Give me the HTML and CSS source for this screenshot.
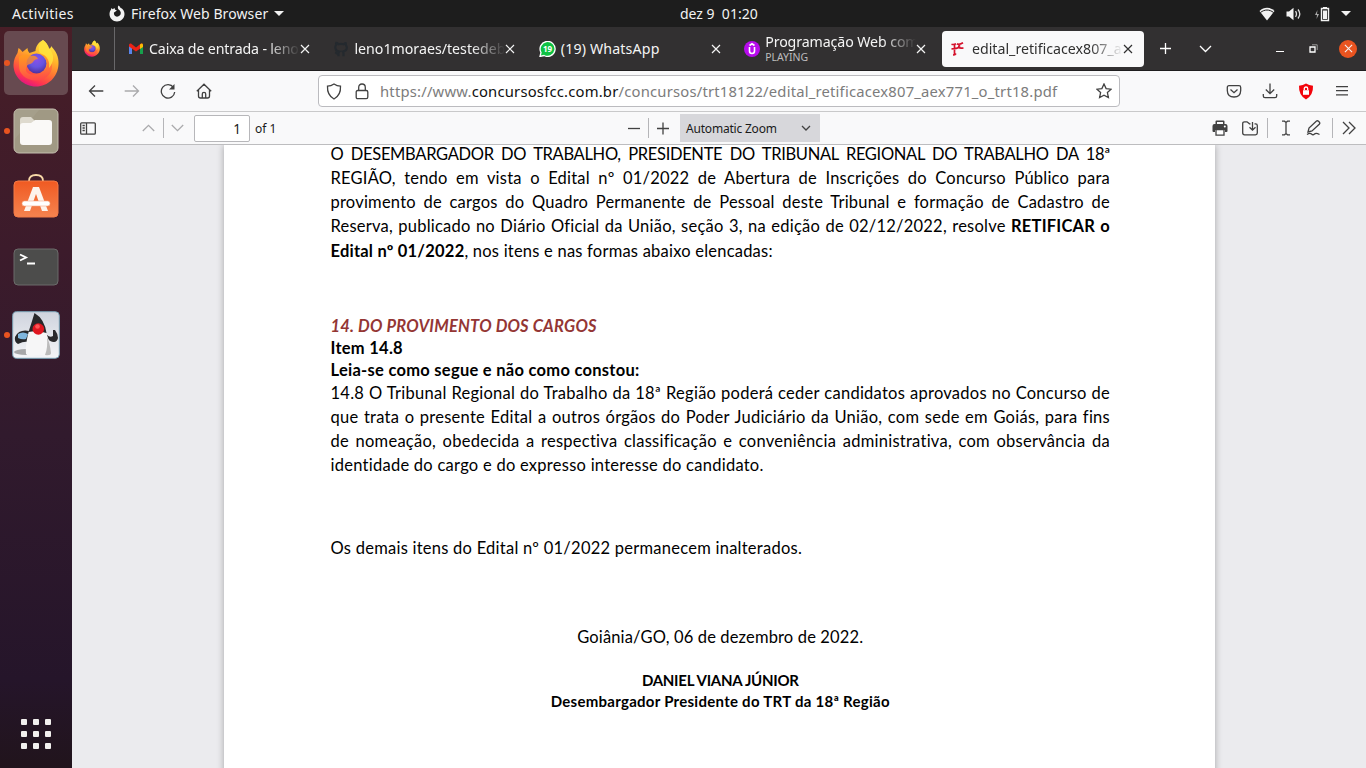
FILE: index.html
```html
<!DOCTYPE html>
<html lang="pt-BR">
<head>
<meta charset="utf-8">
<title>edital_retificacex807_aex771_o_trt18.pdf</title>
<link rel="stylesheet" href="styles.css">
</head>
<body>
<svg class="defs" width="0" height="0">
  <defs>
    <linearGradient id="fire" x1=".8" y1="0" x2=".35" y2="1"><stop offset="0" stop-color="#fff04a"/><stop offset=".35" stop-color="#ffb52a"/><stop offset=".65" stop-color="#ff6a35"/><stop offset=".85" stop-color="#ff3450"/><stop offset="1" stop-color="#e01583"/></linearGradient>
    <radialGradient id="globe" cx=".5" cy=".3" r=".75"><stop offset="0" stop-color="#8a50ea"/><stop offset=".5" stop-color="#6655e0"/><stop offset="1" stop-color="#4b2a94"/></radialGradient>
    <linearGradient id="fox" x1=".3" y1="0" x2=".6" y2="1"><stop offset="0" stop-color="#ff9a1e"/><stop offset=".5" stop-color="#ff7a35"/><stop offset="1" stop-color="#ff4a48"/></linearGradient>
    <linearGradient id="bag" x1="0" y1="0" x2="0" y2="1"><stop offset="0" stop-color="#f05a22"/><stop offset="1" stop-color="#f5834f"/></linearGradient>
    <linearGradient id="duke" x1="0" y1="0" x2="0" y2="1"><stop offset="0" stop-color="#cfd3dd"/><stop offset="1" stop-color="#f4f5f8"/></linearGradient>
    <symbol id="firefox" viewBox="0 0 46 48">
      <path d="M30 1c3 2 5 5 6 9 2-1 2-2 2-3 5 5 8 11 7.500 18C45 38 35 47.500 23 47.500S.5 38 .5 26c0-5 2-9 4-12l1-5c2 1 3 3 4 4l5-4c0 2 1 4 2 5l6-2c0-4 3-9 7.500-11z" fill="url(#fire)"/>
      <circle cx="23.500" cy="24.500" r="10" fill="url(#globe)"/>
      <path d="M6 18c4-3 9-3 12-1 3-1 6 0 7 3-2 0-4 1-5 3-2 3-6 1-7 6-1 5 4 7 9 6.500 6 0 12-4 12-10 0-5-3-9-7-10 7-1 12 5 12 12 0 8-7 14-16 14C13 41.500 6 35 6 27z" fill="url(#fox)" opacity=".8"/>
      <path d="M30 1c-5 5-5 10-3 13 8 3 10 9 9 15 5-6 6-13 0-20-1-3-3-6-6-8z" fill="#ffe33d" opacity=".85"/>
    </symbol>
    <symbol id="x" viewBox="0 0 10 10"><path d="M1 1l8 8M9 1L1 9" stroke="currentColor" stroke-width="1.200" fill="none"/></symbol>
  </defs>
</svg>

<header class="topbar">
  <span class="activities">Activities</span>
  <svg class="ffmono" width="16" height="17" viewBox="0 0 16 17"><path d="M9.500.5c1 .6 1.500 1.500 2 2.300C14 4 15.500 6.300 15.500 9c0 4.200-3.400 7.500-7.500 7.500S.5 13.200.5 9c0-2 .7-3.500 1.500-4.600L2.500 3l1.200 1.200L5.500 3l.6 1.800 1.800.5-2 1.600-1 .7C4.700 10 6 11.700 8 11.700c2.200 0 3.800-1.600 3.800-3.600 0-1.500-.8-2.700-2-3.400C8.600 3.500 8.600 1.800 9.500.5z" fill="#f2f2f2"/></svg>
  <span class="appname">Firefox Web Browser</span>
  <i class="tri tri-app"></i>
  <span class="clock">dez 9&nbsp; 01:20</span>
  <div class="tray">
    <svg width="16" height="14" viewBox="0 0 16 14"><path d="M.5 4C5-.2 11-.2 15.500 4L8 13.500z" fill="#f2f2f2"/><path d="M1.500 5.500c4-3.300 9-3.300 13 0" stroke="#1d1d1d" fill="none"/></svg>
    <svg width="16" height="14" viewBox="0 0 16 14"><path d="M.5 4.500H3L7.500.8v12.400L3 9.500H.5z" fill="#f2f2f2"/><path d="M9.500 4.200q2 2.800 0 5.600M12 2.500q3.600 4.500 0 9" stroke="#ddd" stroke-width="1.300" fill="none"/></svg>
    <svg width="16" height="16" viewBox="0 0 16 16"><path d="M3.500 4L1 9h2L2.500 13 5 8H3z" fill="#aaa"/><path d="M9 1.700h4M7.500 2.500h7v12h-7z" fill="none" stroke="#f2f2f2" stroke-width="1.400"/><path d="M9 4.500h4V13H9z" fill="#f2f2f2"/></svg>
    <i class="tri"></i>
  </div>
</header>

<div class="desktop">
  <nav class="dock">
    <div class="tile tile-active"><i class="dot"></i><svg width="46" height="48"><use href="#firefox"/></svg></div>
    <div class="tile"><i class="dot"></i>
      <svg width="46" height="46" viewBox="0 0 46 46"><rect x="1" y="1" width="44" height="44" rx="5" fill="#a09984" stroke="#c4beaf"/><path d="M6 2h20L2 31V6q0-4 4-4z" fill="#fff" opacity=".06"/><path d="M7 12q0-3 3-3h8l4 4v6H7z" fill="#dedace"/><path d="M10 15h8l4-3h14q3 0 3 3v19q0 3-3 3H10q-3 0-3-3V18q0-3 3-3z" fill="#faf9f7"/></svg></div>
    <div class="tile tile-bag">
      <svg width="46" height="46" viewBox="0 0 46 46"><path d="M16 12V9q0-6 7-6t7 6v3" fill="none" stroke="#f8d9a8" stroke-width="1.800"/><rect x="1" y="9" width="44" height="36" rx="4" fill="url(#bag)" stroke="#f37a46"/><path d="M20 15h6l9 24h-6l-6-17-6 17h-6z" fill="#fdf3ec"/><rect x="9" y="29" width="28" height="5" rx="2.500" fill="#fff" stroke="#f4aa86" stroke-width=".6"/></svg></div>
    <div class="tile">
      <svg width="46" height="38" viewBox="0 0 46 38"><rect x="1" y="1" width="44" height="36" rx="4" fill="#4c4c4b" stroke="#6b6b6a"/><path d="M7 6.500l6 3-6 3M14 15.500h8" stroke="#fff" stroke-width="1.900" fill="none"/></svg></div>
    <div class="tile"><i class="dot"></i>
      <svg width="48" height="48" viewBox="0 0 48 48"><rect x=".7" y=".7" width="46.600" height="46.600" rx="4" fill="url(#duke)" stroke="#7aa4b8"/><ellipse cx="14" cy="41" rx="12" ry="3" fill="#777" opacity=".6"/><path d="M17 20Q7 18 3 26q-1 5 3 7 6-3 10-2z" fill="#27282b"/><path d="M6 23q5-3 10 0l-2 5q-4 1-8-1z" fill="#7fb6de"/><path d="M35 24q3 3 6 1v-6l2 0q3 4 3 8-1 4-4 4-4 0-7-4z" fill="#29292c"/><path d="M17 20q-4 13-3 23 3 4 9 1.500 6-1.500 9 .5 6 1 7-3-1-13-6-22z" fill="#f6f6f7"/><path d="M33 44q6 1 6-2-1-10-4-16 1 11-2 18z" fill="#bbb"/><path d="M22.500 2q10 6 12 20-9-3-18-1 3-9 6-19z" fill="#28282a"/><circle cx="26.300" cy="18" r="5.800" fill="#df1720"/><circle cx="25.500" cy="15.500" r="2.300" fill="#f55"/></svg></div>
    <div class="apps"><i></i><i></i><i></i><i></i><i></i><i></i><i></i><i></i><i></i></div>
  </nav>

  <main class="browser">
    <div class="tabs">
      <div class="pinned"><svg width="16" height="17"><use href="#firefox"/></svg></div>
      <div class="tab">
        <svg width="16" height="16" viewBox="0 0 16 16"><path d="M1 4v9h3V7" fill="#5a84ea"/><path d="M12 7v6h3V4" fill="#17a04c"/><path d="M1 5.500V4q0-2 2-1.500L8 6.500l5-4q2-.5 2 1.500v1.500L8 10.500z" fill="#ee2215"/><path d="M12 3.500q2.500-2 3 .5v2l-3 2z" fill="#fbbc04"/></svg>
        <span class="title title-mail">Caixa de entrada - leno</span><svg class="close" width="10" height="10"><use href="#x"/></svg></div>
      <div class="tab">
        <svg width="16" height="16" viewBox="0 0 16 16"><path d="M5.500 15.300v-2.500c-2 .5-2.500-1.300-3.400-1.600M10.500 15.300v-3c0-1-.3-1.400-.7-1.800 2.400-.3 4-1.300 4-4 0-1-.3-1.700-.9-2.300.1-.7 0-1.500-.2-2-.9 0-1.800.8-2.300 1.100a9 9 0 0 0-4.800 0C5 2.400 4 1.900 3.300 1.900c-.3.800-.3 1.500-.2 2-.5.600-.8 1.300-.8 2.300 0 2.700 1.500 4 4 4.300-.4.400-.8 1-.8 2" fill="none" stroke="#24292e" stroke-width="2.200"/></svg>
        <span class="title title-git">leno1moraes/testedeb</span><svg class="close" width="10" height="10"><use href="#x"/></svg></div>
      <div class="tab">
        <svg width="17" height="16" viewBox="0 0 17 16"><path d="M1 15.500l1-4A7.500 7.500 0 1 1 5 14.500z" fill="#0fc143" stroke="#fff" stroke-width="1.300"/><text x="8.500" y="10.800" class="badge">19</text></svg>
        <span class="title title-wa">(19) WhatsApp</span><svg class="close" width="10" height="10"><use href="#x"/></svg></div>
      <div class="tab">
        <svg width="16" height="16" viewBox="0 0 16 16"><circle cx="8" cy="8" r="8" fill="#b70bec"/><path d="M5.500 6v4q0 2.500 2.500 2.500t2.500-2.500V6M5.500 4.500L8 2.800l2.500 1.700" fill="none" stroke="#fff" stroke-width="1.600"/></svg>
        <div class="stack"><span class="title title-prog">Programação Web com</span><small>PLAYING</small></div><svg class="close" width="10" height="10"><use href="#x"/></svg></div>
      <div class="tab tab-active">
        <svg width="16" height="16" viewBox="0 0 16 16"><path d="M1.500 3.200q2 .8 4.500-.5M4.500 3.500v9.500M1.500 7.800q5 0 9-1.800M3 14q2 0 3-1.500M7 2.700q2 1.500 6-1M10 3.500Q6 8 13.500 7" fill="none" stroke="#d5122c" stroke-width="1.700"/></svg>
        <span class="title title-pdf">edital_retificacex807_a</span><svg class="close" width="10" height="10"><use href="#x"/></svg></div>
      <svg class="plus" width="13" height="13" viewBox="0 0 13 13"><path d="M6.500 1v11M1 6.500h11" stroke="#fff" stroke-width="1.300"/></svg>
      <svg class="alltabs" width="13" height="8" viewBox="0 0 13 8"><path d="M1 1l5.500 5.500L12 1" stroke="#fff" stroke-width="1.300" fill="none"/></svg>
      <div class="winctl">
        <svg width="8" height="9" viewBox="0 0 8 9"><path d="M0 7.500h8" stroke="#fff"/></svg>
        <svg width="9" height="9" viewBox="0 0 9 9"><path d="M1 3h5v5H1z" stroke="#fff" stroke-width="1.300" fill="none"/><path d="M3 .8h5.200V6" stroke="#999" fill="none"/></svg>
        <span class="winclose"><svg width="9" height="9"><use href="#x"/></svg></span>
      </div>
    </div>

    <div class="navbar">
      <div class="navbtns">
        <svg width="16" height="16" viewBox="0 0 16 16"><path d="M15.300 8H1.500M7 2.500L1.500 8 7 13.500" /></svg>
        <svg class="dim" width="16" height="16" viewBox="0 0 16 16"><path d="M.7 8h13.800M9 2.500L14.500 8 9 13.500"/></svg>
        <svg width="16" height="16" viewBox="0 0 16 16"><path d="M13.500 4.500A6.700 6.700 0 1 0 14.700 9"/><path d="M14.500 1v5.500H9z" fill="#414141" stroke="none"/></svg>
        <svg width="16" height="16" viewBox="0 0 16 16"><path d="M.8 8.200L8 1.200l7.200 7M2.500 6.800V13q0 2 2 2h7q2 0 2-2V6.800M6.300 15v-4q0-1.700 1.700-1.700T9.700 11v4"/></svg>
      </div>
      <div class="url">
        <svg width="16" height="17" viewBox="0 0 16 17"><path d="M8 1q3 2 6.500 2.200Q15 12 8 16 1 12 1.500 3.200 5 3 8 1z"/></svg>
        <svg width="14" height="17" viewBox="0 0 14 17"><path d="M3.700 7.500V4.500Q3.700 1 7 1t3.300 3.500v3M1.200 9q0-1.500 1.500-1.500h8.600q1.500 0 1.500 1.500v5q0 1.700-1.500 1.700H2.700Q1.200 15.700 1.200 14z"/></svg>
        <span class="addr">https://www.<b>concursosfcc.com.br</b>/concursos/trt18122/edital_retificacex807_aex771_o_trt18.pdf</span>
        <svg width="16" height="16" viewBox="0 0 16 16"><path d="M8 1l2.100 4.600 5 .6-3.700 3.400 1 5L8 12.200 3.600 14.600l1-5L.9 6.200l5-.6z"/></svg>
      </div>
      <div class="navend">
        <svg width="16" height="16" viewBox="0 0 16 16"><path d="M3 2.700h10q1.700 0 1.700 1.700V7.500Q14.500 14 8 14 1.500 14 1.300 7.500V4.400Q1.300 2.700 3 2.700zM4.500 6.500L8 9.700l3.500-3.200"/></svg>
        <svg width="16" height="16" viewBox="0 0 16 16"><path d="M8 .5v10M3.800 6.500L8 10.700l4.200-4.200M1.300 11v2q0 1.700 1.700 1.700h10q1.700 0 1.700-1.700v-2"/></svg>
        <svg width="16" height="17" viewBox="0 0 16 17"><path d="M8 .5Q11 2.500 15 2.700 15.500 12 8 16.500.5 12 1 2.700 5 2.500 8 .5z" fill="#f3040b" stroke="none"/><path d="M5 7.200h6v4.600H5z" fill="#fff" stroke="none"/><path d="M6.300 7V5.500Q6.300 4 8 4t1.700 1.500V7" stroke="#fff"/></svg>
        <svg class="menu" width="14" height="16" viewBox="0 0 14 16"><path d="M1 3.700h12M1 7.700h12M1 11.900h12"/></svg>
      </div>
    </div>

    <div class="pdfbar">
      <svg class="side" width="16" height="13" viewBox="0 0 16 13"><path d="M1.700.8h12.600q1 0 1 1v9.400q0 1-1 1H1.700q-1 0-1-1V1.800q0-1 1-1zM6.500 1v11M2.500 3.500h2.300M2.500 6h2.300M2.500 8.500h2.300"/></svg>
      <svg class="dim up" width="13" height="8" viewBox="0 0 13 8"><path d="M.8 7l5.700-5.700L12.200 7"/></svg>
      <i class="sep"></i>
      <svg class="dim down" width="13" height="8" viewBox="0 0 13 8"><path d="M.8 1l5.700 5.700L12.200 1"/></svg>
      <span class="pageno">1</span>
      <span class="of">of 1</span>
      <svg class="minus" width="12" height="13" viewBox="0 0 12 13"><path d="M0 6.500h12"/></svg>
      <i class="sep"></i>
      <svg class="zplus" width="12" height="13" viewBox="0 0 12 13"><path d="M0 6.500h12M6 .5v12"/></svg>
      <div class="zoom"><span>Automatic Zoom</span><svg width="10" height="6" viewBox="0 0 10 6"><path d="M1 1l4 4 4-4"/></svg></div>
      <div class="pdfend">
        <svg width="16" height="16" viewBox="0 0 16 16"><path d="M4.500 0.500h7q1 0 1 1V4h1Q15.500 4 15.500 6v5q0 1-1 1H13v-2H3v2H1.500q-1 0-1-1V6q0-2 2-2h1V1.500q0-1 1-1z" fill="#414141" stroke="none"/><path d="M5 2h6v2H5z" fill="#f9f9fa" stroke="none"/><path d="M4 9.700h8v5.500H4z" fill="#fff"/><circle cx="12.800" cy="6.500" r="1" fill="#fff" stroke="none"/></svg>
        <svg class="save" width="16" height="15" viewBox="0 0 16 15"><path d="M5 13.800H2.500q-1.800 0-1.800-1.800V2.500Q.7.800 2.500.8H5l2.500 2h1M12.500 2.800h1q1.800 0 1.800 1.800V12q0 1.800-1.800 1.800H5M10.500 1v8M7.500 6.200l3 3 3-3"/></svg>
        <i class="sep"></i>
        <svg class="caret" width="10" height="16" viewBox="0 0 10 16"><path d="M1 1.200h2.500L5 2.500l1.500-1.300H9M1 14.800h2.500L5 13.500l1.500 1.300H9M5 2.500v11"/></svg>
        <svg class="pen" width="16" height="16" viewBox="0 0 16 16"><path d="M2 12l1-4 7.500-7q1-.7 2 .3l.7.700q1 1 .3 2L6 11z M1 14.500q3-2 4.500-.5t3 0 5 .5"/></svg>
        <i class="sep"></i>
        <svg class="more" width="14" height="14" viewBox="0 0 14 14"><path d="M1 1l6 6-6 6M7 1l6 6-6 6"/></svg>
      </div>
    </div>

    <div class="viewer">
      <article class="page">
        <section class="intro">
          <p class="full l1">O DESEMBARGADOR DO TRABALHO, PRESIDENTE DO TRIBUNAL REGIONAL DO TRABALHO DA 18ª</p>
          <p class="full">REGIÃO, tendo em vista o Edital nº 01/2022 de Abertura de Inscrições do Concurso Público para</p>
          <p class="full">provimento de cargos do Quadro Permanente de Pessoal deste Tribunal e formação de Cadastro de</p>
          <p class="full">Reserva, publicado no Diário Oficial da União, seção 3, na edição de 02/12/2022, resolve <b>RETIFICAR o</b></p>
          <p><b>Edital nº 01/2022</b>, nos itens e nas formas abaixo elencadas:</p>
        </section>
        <section class="heads">
          <h1>14. DO PROVIMENTO DOS CARGOS</h1>
          <h2>Item 14.8</h2>
          <h2>Leia-se como segue e não como constou:</h2>
        </section>
        <section class="item">
          <p class="full">14.8 O Tribunal Regional do Trabalho da 18ª Região poderá ceder candidatos aprovados no Concurso de</p>
          <p class="full">que trata o presente Edital a outros órgãos do Poder Judiciário da União, com sede em Goiás, para fins</p>
          <p class="full">de nomeação, obedecida a respectiva classificação e conveniência administrativa, com observância da</p>
          <p>identidade do cargo e do expresso interesse do candidato.</p>
        </section>
        <p class="rest">Os demais itens do Edital nº 01/2022 permanecem inalterados.</p>
        <p class="date">Goiânia/GO, 06 de dezembro de 2022.</p>
        <p class="sign">DANIEL VIANA JÚNIOR</p>
        <p class="sign role">Desembargador Presidente do TRT da 18ª Região</p>
      </article>
    </div>
  </main>
</div>
</body>
</html>
```
FILE: styles.css
```css
* { box-sizing: border-box; }
body { margin: 0; width: 1366px; height: 768px; overflow: hidden; font-family: "Noto Sans", sans-serif; font-size: 14px; }
svg { display: block; flex: none; }
i { display: block; flex: none; }
p, h1, h2 { margin: 0; }
.defs { position: absolute; }

.topbar { height: 27px; background: #1d1d1d; color: #f2f2f2; display: flex; align-items: center; padding: 0 15px 0 12px; white-space: nowrap; }
.activities { width: 97px; letter-spacing: .35px; }
.appname { width: 139px; margin-left: 6px; letter-spacing: .1px; }
.tri { width: 0; height: 0; border: 5px solid transparent; border-top-color: #f2f2f2; border-bottom: 0; }
.tri-app { margin-left: 4px; }
.clock { margin-left: 396px; letter-spacing: 0; }
.tray { margin-left: auto; display: flex; align-items: center; gap: 11.500px; }

.desktop { display: flex; height: 741px; }
.dock { width: 72px; flex: none; background: linear-gradient(#481e27, #3c1b2b 30%, #311a2d 55%, #25152a 88%, #21141c); display: flex; flex-direction: column; align-items: center; padding: 4px 0 19px; gap: 4px; }
.tile { width: 64px; height: 64px; border-radius: 5px; display: flex; align-items: center; justify-content: center; position: relative; }
.tile-active { background: #674a50; }
.tile-bag { padding-bottom: 8px; }
.dot { position: absolute; left: 0; top: 29px; width: 6px; height: 6px; border-radius: 50%; background: #e95420; }
.apps { margin-top: auto; display: grid; grid-template-columns: repeat(3, 6px); gap: 6px; }
.apps i { width: 6px; height: 6px; border-radius: 1px; background: #f2f0ee; }

.browser { flex: 1; min-width: 0; display: flex; flex-direction: column; }
.tabs { height: 44px; background: #323031; border-bottom: 1px solid #1f1e1f; color: #f4f4f4; display: flex; align-items: center; }
.pinned { width: 43px; height: 43px; border-right: 1px solid #69686a; padding: 13px 0 0 12px; margin-right: 2px; flex: none; }
.tab { width: 202px; height: 36px; margin-left: 2px; margin-right: 1.400px; flex: none; display: flex; align-items: center; padding-left: 9px; }
.tab > svg:first-child { margin-right: 5px; }
.title { width: 151px; overflow: hidden; white-space: nowrap; font-size: 14.200px; line-height: 20px; -webkit-mask-image: linear-gradient(90deg, #000 78%, transparent); mask-image: linear-gradient(90deg, #000 78%, transparent); }
.title-mail { letter-spacing: -.15px; }
.title-prog { letter-spacing: -.1px; }
.close { color: currentColor; }
.title-wa { mask-image: none; -webkit-mask-image: none; letter-spacing: .15px; width: 150px; }
.badge { font: bold 8px "Noto Sans", sans-serif; fill: #fff; text-anchor: middle; }
.stack { display: flex; flex-direction: column; }
.stack .title { line-height: 18px; }
.stack small { font-size: 10.500px; line-height: 13px; color: #bdbcbd; }
.tab-active { background: #f9f9fa; color: #303030; border-radius: 4px; margin-left: 3.400px; padding-left: 8px; }
.tab-active > svg:first-child { margin-right: 6px; }
.plus { margin-left: 13.600px; }
.alltabs { margin-left: 27px; }
.winctl { margin-left: auto; margin-right: 9px; display: flex; align-items: center; gap: 25px; }
.winclose { width: 18px; height: 18px; border-radius: 50%; background: #e95420; display: grid; place-items: center; margin-left: -4px; }

.navbar, .pdfbar { background: #f9f9fa; display: flex; align-items: center; }
.navbar svg, .pdfbar svg { fill: none; stroke: #414141; stroke-width: 1.300; }
.navbar { height: 41px; border-bottom: 1px solid #c9c9ca; }
.navbtns { display: flex; gap: 20px; padding-left: 16px; width: 246px; }
.navbar .dim, .pdfbar .dim { stroke: #aaaaac; }
.url { width: 802px; height: 32px; border: 1px solid #bbbbbf; border-radius: 4px; background: #fff; display: flex; align-items: center; padding: 0 7px; }
.url svg + svg { margin-left: 13px; }
.addr { flex: 1; margin-left: 11px; font-size: 14.800px; letter-spacing: .2px; color: #7c7c7c; white-space: nowrap; }
.addr b { font-weight: 400; color: #101010; }
.navend { display: flex; align-items: center; gap: 20px; margin-left: 106px; }
.menu { margin-left: 1px; }
.pdfbar { height: 33px; border-bottom: 1px solid #bdbdbf; flex: none; font-size: 12px; color: #1a1a1a; }
.side { margin-left: 8px; }
.up { margin-left: 46px; }
.sep { width: 1px; height: 20px; background: #b5b5b8; }
.up + .sep { margin-left: 8px; }
.down { margin-left: 7px; }
.pageno { width: 56px; height: 27px; border: 1px solid #b7b7ba; border-radius: 2px; background: #fff; margin-left: 10px; text-align: right; padding-right: 8px; line-height: 26px; font-size: 13.500px; }
.of { margin-left: 5px; width: 373px; }
.minus + .sep { margin-left: 8px; }
.zplus { margin-left: 8px; }
.zoom { margin-left: 11px; width: 140px; height: 28px; background: #d7d7db; display: flex; align-items: center; justify-content: space-between; padding: 0 9px 0 6px; letter-spacing: -.2px; }
.pdfend { display: flex; align-items: center; margin-left: auto; margin-right: 10px; }
.save { margin: 0 9px 0 14px; }
.caret { margin: 0 15px 0 13px; }
.pen { margin-right: 10px; }
.more { margin-left: 9px; }

.viewer { flex: 1; background: #ebebee; min-height: 0; overflow: hidden; padding-left: 152px; }
.page { width: 991px; height: 640px; background: #fff; box-shadow: 0 0 7px rgba(0,0,0,.3); padding: 0 105px 0 106.500px; color: #000; font: 16.500px/24.150px Lato, sans-serif; white-space: nowrap; }
.full { text-align: justify; text-align-last: justify; }
.intro { letter-spacing: .22px; transform: translateY(-3px); }
.l1 { letter-spacing: -.32px; }
.heads { margin-top: 49px; line-height: 22px; letter-spacing: .27px; }
.heads h1 { font-size: 16.500px; font-style: italic; color: #943634; letter-spacing: .22px; }
.heads h2 { font-size: 16.500px; }
.item { letter-spacing: .26px; }
.rest { margin-top: 59px; letter-spacing: .25px; }
.date { margin-top: 64px; text-align: center; letter-spacing: .15px; }
.sign { margin-top: 21px; text-align: center; font-size: 15px; font-weight: 700; line-height: 21px; letter-spacing: -.27px; }
.role { margin-top: 0; letter-spacing: .27px; }
```
